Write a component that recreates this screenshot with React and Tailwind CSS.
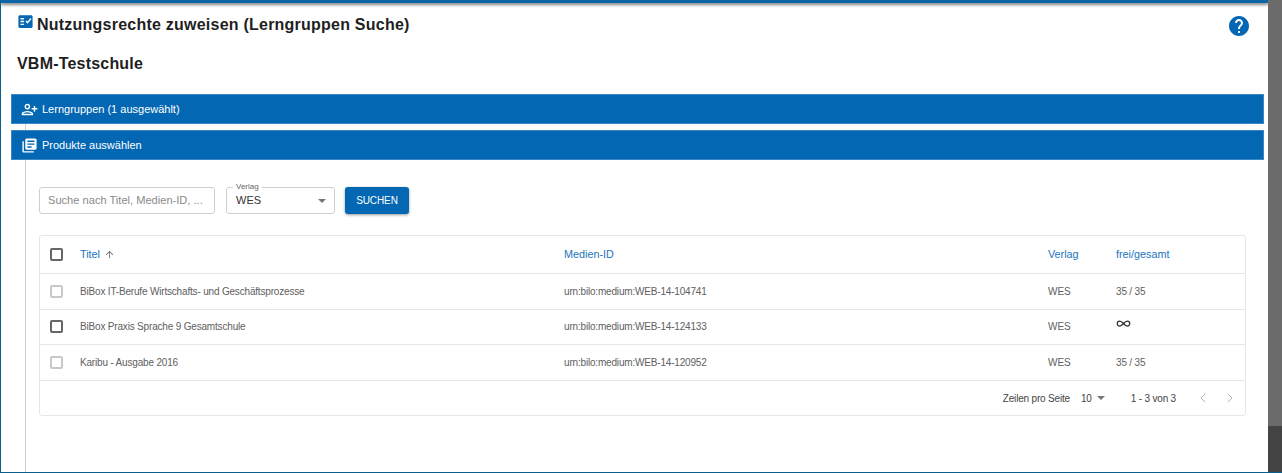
import React from "react";
import { ChevronLeft, ChevronRight, Infinity as InfinityIcon } from "lucide-react";

const rows = [
  { title: "BiBox IT-Berufe Wirtschafts- und Geschäftsprozesse", id: "urn:bilo:medium:WEB-14-104741", count: "35 / 35", enabled: false },
  { title: "BiBox Praxis Sprache 9 Gesamtschule", id: "urn:bilo:medium:WEB-14-124133", count: null, enabled: true },
  { title: "Karibu - Ausgabe 2016", id: "urn:bilo:medium:WEB-14-120952", count: "35 / 35", enabled: false },
];

function Checkbox({ enabled }) {
  return (
    <div className={`w-[13px] h-[13px] rounded-[2px] border-2 ${enabled ? "border-[#666666]" : "border-[#c8c8c8]"}`} />
  );
}

function App() {
  return (
    <div className="h-[473px] w-[1282px] overflow-hidden flex bg-white font-['Liberation_Sans',sans-serif] border-l border-b border-[#0b5d8c]">
      <div className="flex-1 min-w-0 flex flex-col">
        {/* Top bar */}
        <div className="h-[3px] bg-[#0b66a8] shadow-[0_2px_3px_rgba(0,0,0,0.5)]" />

        {/* Page title */}
        <div className="flex items-start justify-between pl-[16px] pr-[17px] pt-[11px]">
          <div className="flex items-start">
            <svg className="w-[17px] h-[17px] mt-[-1px] fill-[#0367b3]" viewBox="0 0 24 24">
              <path d="M20 3H4c-1.1 0-2 .9-2 2v14c0 1.1.9 2 2 2h16c1.1 0 2-.9 2-2V5c0-1.1-.9-2-2-2zM10 17H5v-2h5v2zm0-4H5v-2h5v2zm0-4H5V7h5v2zm4.82 6L12 12.16l1.41-1.41 1.41 1.42L18.99 7l1.42 1.42L14.82 15z" />
            </svg>
            <h1 className="ml-[3px] text-[16px] leading-[22px] font-bold tracking-[0.23px] text-[#1f1f1f]">
              Nutzungsrechte zuweisen (Lerngruppen Suche)
            </h1>
          </div>
          <svg className="w-[24px] h-[24px] fill-[#0367b3]" viewBox="0 0 24 24">
            <path d="M12 2C6.48 2 2 6.48 2 12s4.48 10 10 10 10-4.48 10-10S17.52 2 12 2zm1 17h-2v-2h2v2zm2.07-7.75l-.9.92C13.45 12.9 13 13.5 13 15h-2v-.5c0-1.1.45-2.1 1.17-2.83l1.24-1.26c.37-.36.59-.86.59-1.41 0-1.1-.9-2-2-2s-2 .9-2 2H8c0-2.21 1.79-4 4-4s4 1.79 4 4c0 .88-.36 1.68-.93 2.25z" />
          </svg>
        </div>

        <h2 className="pl-[16px] mt-[15px] text-[16px] leading-[22px] font-bold tracking-[0.2px] text-[#1f1f1f]">VBM-Testschule</h2>

        {/* Accordion headers */}
        <div className="mt-[19px] ml-[10px] mr-[4px]">
          <div className="h-[30px] flex items-center bg-[#0367b3] border border-[#3b87c4] text-white text-[11px] pl-[9px]">
            <svg className="w-[17px] h-[17px] fill-white -scale-x-100" viewBox="0 0 24 24">
              <path d="M15 12c2.21 0 4-1.79 4-4s-1.79-4-4-4-4 1.79-4 4 1.79 4 4 4zm0-6c1.1 0 2 .9 2 2s-.9 2-2 2-2-.9-2-2 .9-2 2-2zm0 8c-2.67 0-8 1.34-8 4v2h16v-2c0-2.66-5.33-4-8-4zm-6 4c.22-.72 3.31-2 6-2 2.7 0 5.8 1.29 6 2H9zm-3-3v-3h3v-2H6V7H4v3H1v2h3v3h2z" />
            </svg>
            <span className="ml-[4px]">Lerngruppen (1 ausgewählt)</span>
          </div>
          <div className="h-[6px] ml-[14px] border-l border-[#cfcfcf]" />
          <div className="h-[30px] flex items-center bg-[#0367b3] border border-[#3b87c4] text-white text-[11px] pl-[9px]">
            <svg className="w-[17px] h-[17px] fill-white" viewBox="0 0 24 24">
              <path d="M4 6H2v14c0 1.1.9 2 2 2h14v-2H4V6zm16-4H8c-1.1 0-2 .9-2 2v12c0 1.1.9 2 2 2h12c1.1 0 2-.9 2-2V4c0-1.1-.9-2-2-2zm-1 9H9V9h10v2zm-4 4H9v-2h6v2zm4-8H9V5h10v2z" />
            </svg>
            <span className="ml-[4px]">Produkte auswählen</span>
          </div>
        </div>

        {/* Panel content */}
        <div className="flex-1 ml-[24px] border-l border-[#cfcfcf] pl-[13px] pr-[21px] pt-[27px]">
          <div className="flex items-stretch h-[27px]">
            <div className="w-[176px] border border-[#cfcfcf] rounded-[3px] flex items-center pl-[8px] text-[11.1px] text-[#8a8a8a] whitespace-nowrap">
              Suche nach Titel, Medien-ID, ...
            </div>
            <div className="relative ml-[11px] w-[109px] border border-[#cfcfcf] rounded-[3px] flex items-center justify-between pl-[9px] pr-[8px] text-[11px] text-[#333333]">
              <span className="absolute -top-[6px] left-[6px] bg-white px-[3px] text-[8px] leading-[9px] text-[#666666]">Verlag</span>
              WES
              <div className="w-0 h-0 border-x-[4px] border-x-transparent border-t-[4px] border-t-[#777777]" />
            </div>
            <button className="ml-[10px] w-[64px] rounded-[3px] bg-[#0367b3] text-white text-[10px] tracking-[-0.1px] shadow-[0_1px_3px_rgba(0,0,0,0.4)]">
              SUCHEN
            </button>
          </div>

          {/* Product table */}
          <div className="mt-[21px] w-[1207px] border border-[#e6e6e6] rounded-[3px] text-[10px] tracking-[-0.18px] text-[#606060]">
            <div className="grid grid-cols-[40px_484px_484px_68px_1fr] items-center h-[38px] border-b border-[#e6e6e6] text-[10.8px] tracking-normal text-[#1b75bc]">
              <div className="pl-[10px]">
                <Checkbox enabled />
              </div>
              <div className="flex items-center">
                Titel
                <svg className="ml-[4px] w-[11px] h-[11px] fill-[#777777]" viewBox="0 0 24 24">
                  <path d="M4 12l1.41 1.41L11 7.83V20h2V7.83l5.58 5.59L20 12l-8-8-8 8z" />
                </svg>
              </div>
              <div>Medien-ID</div>
              <div>Verlag</div>
              <div>frei/gesamt</div>
            </div>
            {rows.map((row) => (
              <div
                key={row.id}
                className="grid grid-cols-[40px_484px_484px_68px_1fr] items-center h-[35.6px] border-b border-[#e6e6e6]"
              >
                <div className="pl-[10px]">
                  <Checkbox enabled={row.enabled} />
                </div>
                <div>{row.title}</div>
                <div>{row.id}</div>
                <div className="tracking-normal">WES</div>
                <div>
                  {row.count ? (
                    row.count
                  ) : (
                    <InfinityIcon className="w-[15px] h-[15px] mt-[-6px] text-[#333333]" strokeWidth={2} />
                  )}
                </div>
              </div>
            ))}
            {/* Pagination */}
            <div className="h-[34.5px] flex items-center justify-end pr-[7px] text-[#444444]">
              <span>Zeilen pro Seite</span>
              <span className="ml-[11px]">10</span>
              <div className="ml-[5px] w-0 h-0 border-x-[4px] border-x-transparent border-t-[4px] border-t-[#777777]" />
              <span className="ml-[26px]">1 - 3 von 3</span>
              <ChevronLeft className="ml-[19px] w-[16px] h-[16px] text-[#b5b5b5]" strokeWidth={1.5} />
              <ChevronRight className="ml-[11px] w-[16px] h-[16px] text-[#b5b5b5]" strokeWidth={1.5} />
            </div>
          </div>
        </div>
      </div>

      {/* Window scrollbar */}
      <div className="w-[14px] flex flex-col">
        <div className="flex-1 bg-[#6b6b6b]" />
        <div className="h-[46px] bg-[#444444]" />
      </div>
    </div>
  );
}

export default App;
